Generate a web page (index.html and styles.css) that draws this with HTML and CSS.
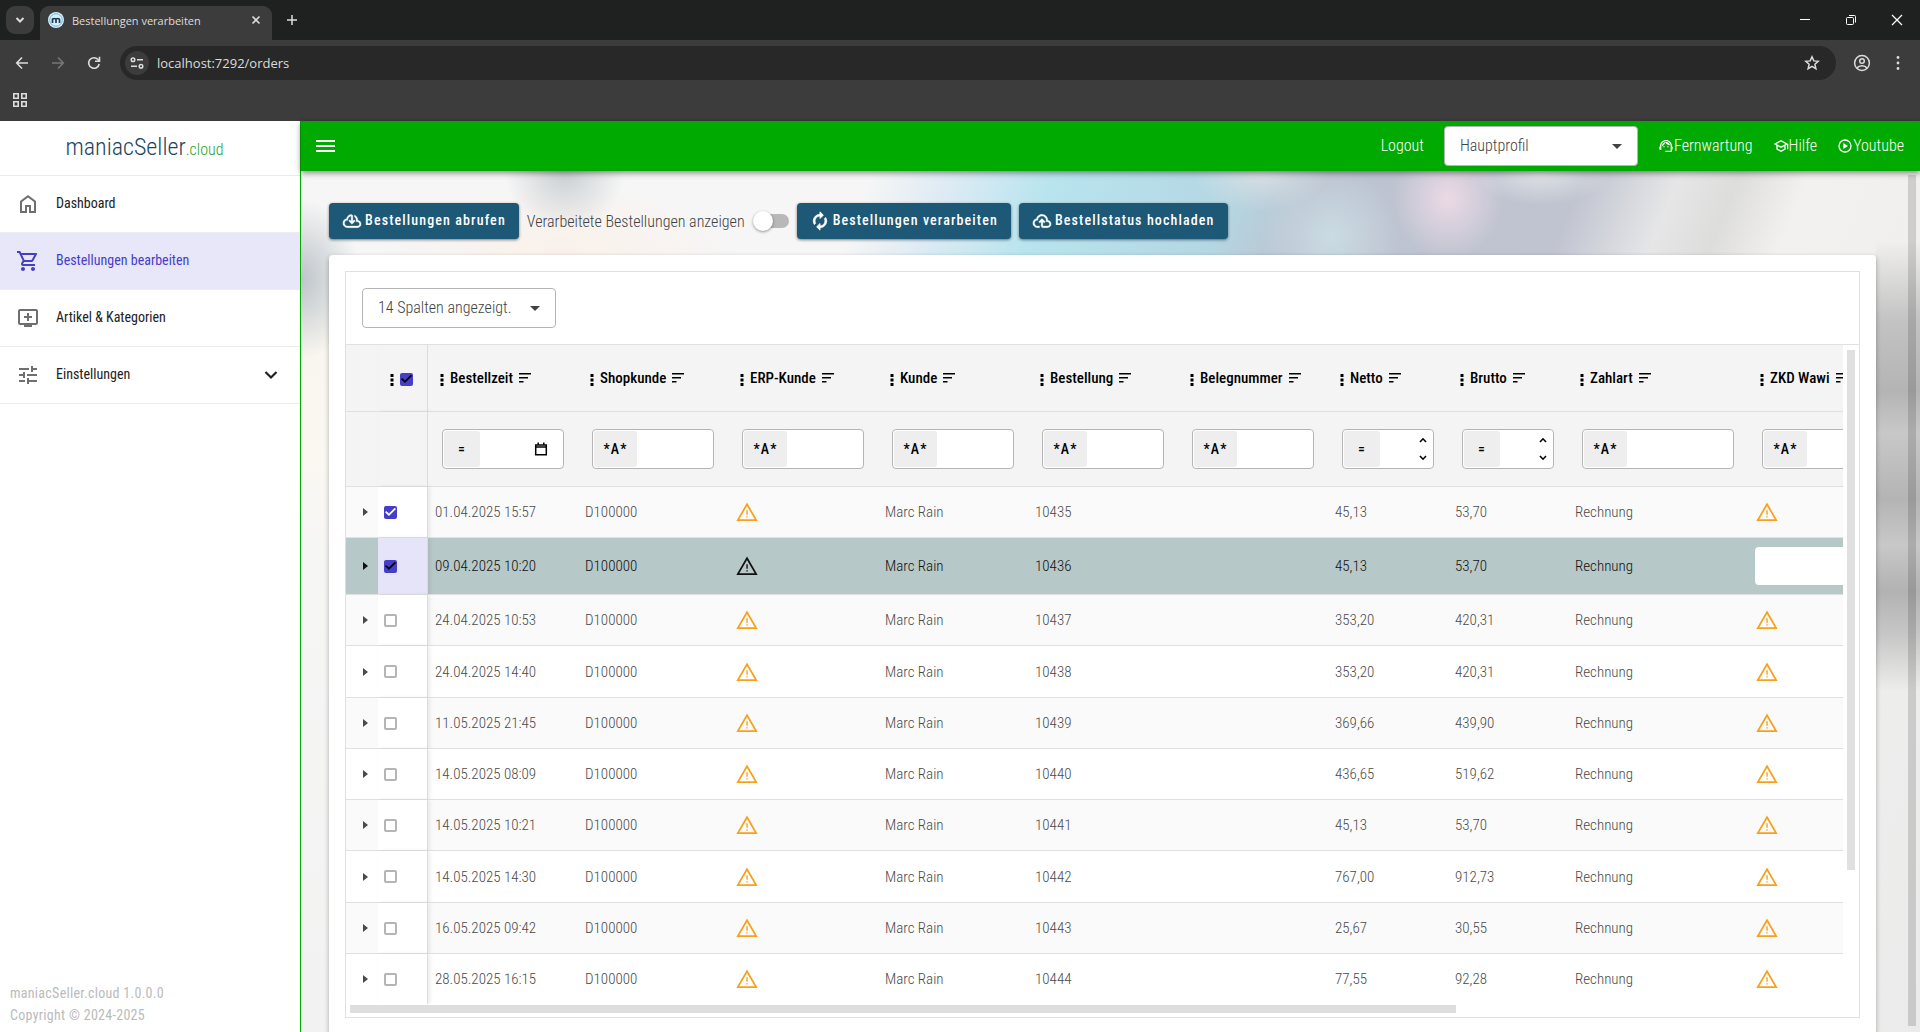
FILE: index.html
```html
<!DOCTYPE html>
<html lang="de">
<head>
<meta charset="utf-8">
<title>Bestellungen verarbeiten</title>
<link rel="stylesheet" href="styles.css">
</head>
<body>
<svg class="sprite" aria-hidden="true">
  <symbol id="i-warn" viewBox="0 0 24 24"><path d="M12 3.6 22 20.8H2z" fill="none" stroke="currentColor" stroke-width="1.9"/><path d="M11.3 10h1.5v5h-1.5zM11.3 16.5h1.5V18h-1.5z" fill="currentColor"/></symbol>
  <symbol id="i-sort" viewBox="0 0 16 16"><path d="M2 3h12v1.600H2zM2 7h9v1.600H2zM2 11h4.500v1.600H2z"/></symbol>
  <symbol id="i-dots" viewBox="0 0 4 14"><path d="M.5 1h3v3h-3zM.5 5.500h3v3h-3zM.5 10h3v3h-3z"/></symbol>
  <symbol id="i-caret" viewBox="0 0 10 5"><path d="M0 0h10L5 5z"/></symbol>
  <symbol id="i-right" viewBox="0 0 5 8"><path d="M0 0l5 4-5 4z"/></symbol>
  <symbol id="i-up" viewBox="0 0 8 6"><path d="M1 5l3-3.200L7 5" fill="none" stroke="currentColor" stroke-width="1.600"/></symbol>
  <symbol id="i-down" viewBox="0 0 8 6"><path d="M1 1l3 3.200L7 1" fill="none" stroke="currentColor" stroke-width="1.600"/></symbol>
</svg>

<header class="browser">
  <div class="tabstrip">
    <button class="tab-search" aria-label="Tabs suchen"><svg width="10" height="8" viewBox="0 0 10 8"><path d="M1.500 2 5 5.500 8.500 2" fill="none" stroke="currentColor" stroke-width="2"/></svg></button>
    <div class="tab">
      <svg class="favicon" width="16" height="16" viewBox="0 0 16 16"><circle cx="8" cy="8" r="8" fill="#d9f0fb"/><circle cx="8" cy="8" r="6.300" fill="none" stroke="#6fb4dc"/><path d="M4.500 11V6.500M4.500 8c0-2 3.500-2 3.500 0v3M8 8c0-2 3.500-2 3.500 0v3" fill="none" stroke="#1b3a57" stroke-width="1.700"/></svg>
      <span class="tab-title">Bestellungen verarbeiten</span>
      <button class="plain" aria-label="Tab schließen"><svg width="10" height="10" viewBox="0 0 10 10"><path d="M1.500 1.500l7 7M8.500 1.500l-7 7" stroke="currentColor" stroke-width="1.600"/></svg></button>
    </div>
    <button class="plain new-tab" aria-label="Neuer Tab"><svg width="12" height="12" viewBox="0 0 12 12"><path d="M6 1v10M1 6h10" stroke="currentColor" stroke-width="1.500"/></svg></button>
    <div class="window-buttons">
      <button class="plain" aria-label="Minimieren"><svg width="12" height="12" viewBox="0 0 12 12"><path d="M1 5.500h10" stroke="currentColor"/></svg></button>
      <button class="plain" aria-label="Wiederherstellen"><svg width="12" height="12" viewBox="0 0 12 12" fill="none" stroke="currentColor"><rect x="1.500" y="3.500" width="7" height="7" rx="1"/><path d="M4 1.500h5.500a1 1 0 0 1 1 1V8.500"/></svg></button>
      <button class="plain" aria-label="Schließen"><svg width="12" height="12" viewBox="0 0 12 12"><path d="M1 1l10 10M11 1 1 11" stroke="currentColor" stroke-width="1.200"/></svg></button>
    </div>
  </div>
  <div class="navbar">
    <button class="plain nav-button" aria-label="Zurück"><svg width="14" height="14" viewBox="0 0 14 14"><path d="M13 7H2M7 1.500 1.700 7 7 12.500" fill="none" stroke="currentColor" stroke-width="1.600"/></svg></button>
    <button class="plain nav-button off" aria-label="Vorwärts"><svg width="14" height="14" viewBox="0 0 14 14"><path d="M1 7h11M7 1.500 12.300 7 7 12.500" fill="none" stroke="currentColor" stroke-width="1.600"/></svg></button>
    <button class="plain nav-button" aria-label="Neu laden"><svg width="14" height="14" viewBox="0 0 14 14"><path d="M12.200 8A5.300 5.300 0 1 1 11 3.500l1.500 1.300M12.500.8v4.500H8" fill="none" stroke="currentColor" stroke-width="1.600"/></svg></button>
    <div class="omnibox">
      <button class="site-info" aria-label="Websiteinformationen"><svg width="14" height="12" viewBox="0 0 14 12" fill="none" stroke="currentColor" stroke-width="1.500"><circle cx="3" cy="2.800" r="1.800"/><path d="M7 2.800h6M1 9.200h6"/><circle cx="11" cy="9.200" r="1.800"/></svg></button>
      <input class="address" type="text" aria-label="Adresse" value="localhost:7292/orders">
      <button class="plain" aria-label="Lesezeichen"><svg width="16" height="16" viewBox="0 0 16 16"><path d="M8 1.800l1.800 4.100 4.400.4-3.300 3 1 4.400L8 11.400l-3.900 2.300 1-4.400-3.300-3 4.400-.4z" fill="none" stroke="currentColor" stroke-width="1.500"/></svg></button>
    </div>
    <button class="plain profile" aria-label="Profil"><svg width="18" height="18" viewBox="0 0 18 18" fill="none" stroke="currentColor" stroke-width="1.500"><circle cx="9" cy="9" r="7.400"/><circle cx="9" cy="7" r="2.300"/><path d="M4 14c2-3 8-3 10 0"/></svg></button>
    <button class="plain" aria-label="Menü"><svg width="4" height="16" viewBox="0 0 4 16"><circle cx="2" cy="2.500" r="1.400"/><circle cx="2" cy="8" r="1.400"/><circle cx="2" cy="13.500" r="1.400"/></svg></button>
  </div>
  <div class="bookmarks">
    <button class="plain" aria-label="Apps"><svg width="14" height="14" viewBox="0 0 14 14" fill="none" stroke="currentColor" stroke-width="1.600"><path d="M.8.800h4.400v4.400H.8zM8.800.800h4.400v4.400H8.800zM.8 8.800h4.400v4.400H.8zM8.800 8.800h4.400v4.400H8.800z"/></svg></button>
  </div>
</header>

<div class="app">
  <aside class="sidebar">
    <div class="brand"><span class="brand-name">maniacSeller</span><span class="brand-tld">.cloud</span></div>
    <nav class="menu">
      <a class="menu-item" href="#"><svg width="24" height="24" viewBox="0 0 24 24"><path d="M6 19h3v-6h6v6h3v-9l-6-4.500L6 10v9zm-2 2V9l8-6 8 6v12h-7v-6h-2v6H4z"/></svg><span>Dashboard</span></a>
      <a class="menu-item active" href="#"><svg width="24" height="24" viewBox="0 0 24 24"><path d="M15.550 13c.75 0 1.410-.41 1.750-1.030l3.580-6.490A.996.996 0 0 0 20.010 4H5.210l-.94-2H1v2h2l3.600 7.590-1.350 2.440C4.520 15.370 5.480 17 7 17h12v-2H7l1.100-2h7.450zM6.160 6h12.150l-2.760 5H8.530L6.160 6zM7 18c-1.100 0-1.990.9-1.990 2S5.900 22 7 22s2-.9 2-2-.9-2-2-2zm10 0c-1.100 0-1.990.9-1.990 2s.89 2 1.990 2 2-.9 2-2-.9-2-2-2z"/></svg><span>Bestellungen bearbeiten</span></a>
      <a class="menu-item" href="#"><svg width="24" height="24" viewBox="0 0 24 24"><path d="M20 3H4a2 2 0 0 0-2 2v12a2 2 0 0 0 2 2h4v2h8v-2h4a2 2 0 0 0 2-2V5a2 2 0 0 0-2-2zm0 14H4V5h16v12zm-4-7v2h-3v3h-2v-3H8v-2h3V7h2v3h3z"/></svg><span>Artikel &amp; Kategorien</span></a>
      <a class="menu-item" href="#"><svg width="24" height="24" viewBox="0 0 24 24"><path d="M3 17v2h6v-2H3zM3 5v2h10V5H3zm10 16v-2h8v-2h-8v-2h-2v6h2zM7 9v2H3v2h4v2h2V9H7zm14 4v-2H11v2h10zm-6-4h2V7h4V5h-4V3h-2v6z"/></svg><span>Einstellungen</span><svg class="chevron" width="14" height="10" viewBox="0 0 14 10"><path d="M1.500 2 7 7.500 12.500 2" fill="none" stroke="currentColor" stroke-width="2.200"/></svg></a>
    </nav>
    <footer class="version"><p>maniacSeller.cloud 1.0.0.0</p><p>Copyright © 2024-2025</p></footer>
  </aside>

  <div class="content">
    <header class="topbar">
      <button class="plain burger" aria-label="Menü"><svg width="20" height="14" viewBox="0 0 20 14"><path d="M0 1h19v2H0zM0 6h19v2H0zM0 11h19v2H0z" fill="currentColor"/></svg></button>
      <a class="logout" href="#">Logout</a>
      <div class="select profile-select">
        <select aria-label="Profil"><option>Hauptprofil</option></select>
        <svg width="10" height="5"><use href="#i-caret"/></svg>
      </div>
      <a class="top-link" href="#"><svg width="16" height="16" viewBox="0 0 24 24"><path d="M21 12.220C21 6.730 16.740 3 12 3c-4.690 0-9 3.650-9 9.280-.6.340-1 .98-1 1.720v2c0 1.100.9 2 2 2h1v-6.100c0-3.870 3.130-7 7-7s7 3.130 7 7V19h-8v2h8c1.100 0 2-.9 2-2v-1.220c.59-.31 1-.92 1-1.640v-2.300c0-.7-.41-1.310-1-1.620zM9 12a1 1 0 1 0 0 2 1 1 0 0 0 0-2zM15 12a1 1 0 1 0 0 2 1 1 0 0 0 0-2zM18 11.030A6.040 6.040 0 0 0 12.050 6c-3.030 0-6.290 2.510-6.030 6.450a8.075 8.075 0 0 0 4.860-5.890c1.310 2.630 4 4.440 7.120 4.470z"/></svg><span>Fernwartung</span></a>
      <a class="top-link" href="#"><svg width="16" height="16" viewBox="0 0 24 24"><path d="M12 3 1 9l4 2.180v6L12 21l7-3.820v-6l2-1.090V17h2V9L12 3zm6.820 6L12 12.720 5.180 9 12 5.280 18.820 9zM17 15.990l-5 2.730-5-2.730v-3.720L12 15l5-2.730v3.720z"/></svg><span>Hilfe</span></a>
      <a class="top-link" href="#"><svg width="16" height="16" viewBox="0 0 24 24"><path d="M12 2a10 10 0 1 0 0 20 10 10 0 0 0 0-20zm0 18a8 8 0 1 1 0-16 8 8 0 0 1 0 16zM9.500 16.500l7-4.500-7-4.500z"/></svg><span>Youtube</span></a>
    </header>

    <main class="page">
      <div class="page-body">
        <div class="actions">
          <button class="action"><svg width="20" height="20" viewBox="0 -960 960 960"><path d="M260-160q-91 0-155.500-63T40-377q0-78 47-139t123-78q17-72 85-137t145-65q33 0 56.500 23.500T520-716v242l64-62 56 56-160 160-160-160 56-56 64 62v-242q-76 14-118 73.500T280-520h-20q-58 0-99 41t-41 99q0 58 41 99t99 41h480q42 0 71-29t29-71q0-42-29-71t-71-29h-60v-80q0-48-22-89.500T600-680v-93q74 35 117 103.500T760-520q69 8 114.500 59.500T920-340q0 75-52.500 127.500T740-160H260Z"/></svg><span>Bestellungen abrufen</span></button>
          <label class="toggle" for="processed">Verarbeitete Bestellungen anzeigen<input id="processed" type="checkbox" role="switch"></label>
          <button class="action"><svg width="20" height="20" viewBox="0 0 24 24"><path d="M12 6v3l4-4-4-4v3c-4.420 0-8 3.580-8 8 0 1.570.46 3.030 1.240 4.260L6.700 14.800A5.870 5.870 0 0 1 6 12c0-3.310 2.690-6 6-6zm6.760 1.740L17.300 9.200c.44.840.7 1.790.7 2.800 0 3.310-2.690 6-6 6v-3l-4 4 4 4v-3c4.420 0 8-3.580 8-8 0-1.570-.46-3.030-1.240-4.260z" stroke-width=".6"/></svg><span>Bestellungen verarbeiten</span></button>
          <button class="action"><svg width="20" height="20" viewBox="0 -960 960 960"><path d="M260-160q-91 0-155.500-63T40-377q0-78 47-139t123-78q25-92 100-149t170-57q117 0 198.500 81.500T760-520q69 8 114.500 59.500T920-340q0 75-52.500 127.500T740-160H520q-33 0-56.500-23.500T440-240v-206l-64 62-56-56 160-160 160 160-56 56-64-62v206h220q42 0 71-29t29-71q0-42-29-71t-71-29h-60v-80q0-83-58.500-141.500T480-720q-83 0-141.500 58.500T280-520h-20q-58 0-99 41t-41 99q0 58 41 99t99 41h100v80H260Z"/></svg><span>Bestellstatus hochladen</span></button>
        </div>

        <section class="card">
          <div class="grid-panel">
            <div class="grid-tools">
              <div class="select column-select">
                <select aria-label="Spalten"><option>14 Spalten angezeigt.</option></select>
                <svg width="10" height="5"><use href="#i-caret"/></svg>
              </div>
            </div>
            <div class="grid-area">
              <div class="grid-viewport">
                <table class="orders">
                  <colgroup><col class="w-expand"><col class="w-check"><col class="w-text"><col class="w-text"><col class="w-text"><col class="w-text"><col class="w-text"><col class="w-text"><col class="w-number"><col class="w-number"><col class="w-wide"><col class="w-wide"></colgroup>
                  <thead>
                    <tr class="titles">
                      <th></th>
                      <th class="check"><span class="head"><svg width="4" height="14"><use href="#i-dots"/></svg><input type="checkbox" class="dark" aria-label="Alle auswählen" checked></span></th>
                      <th><span class="head"><svg width="4" height="14"><use href="#i-dots"/></svg>Bestellzeit<svg width="16" height="16"><use href="#i-sort"/></svg></span></th>
                      <th><span class="head"><svg width="4" height="14"><use href="#i-dots"/></svg>Shopkunde<svg width="16" height="16"><use href="#i-sort"/></svg></span></th>
                      <th><span class="head"><svg width="4" height="14"><use href="#i-dots"/></svg>ERP-Kunde<svg width="16" height="16"><use href="#i-sort"/></svg></span></th>
                      <th><span class="head"><svg width="4" height="14"><use href="#i-dots"/></svg>Kunde<svg width="16" height="16"><use href="#i-sort"/></svg></span></th>
                      <th><span class="head"><svg width="4" height="14"><use href="#i-dots"/></svg>Bestellung<svg width="16" height="16"><use href="#i-sort"/></svg></span></th>
                      <th><span class="head"><svg width="4" height="14"><use href="#i-dots"/></svg>Belegnummer<svg width="16" height="16"><use href="#i-sort"/></svg></span></th>
                      <th><span class="head"><svg width="4" height="14"><use href="#i-dots"/></svg>Netto<svg width="16" height="16"><use href="#i-sort"/></svg></span></th>
                      <th><span class="head"><svg width="4" height="14"><use href="#i-dots"/></svg>Brutto<svg width="16" height="16"><use href="#i-sort"/></svg></span></th>
                      <th><span class="head"><svg width="4" height="14"><use href="#i-dots"/></svg>Zahlart<svg width="16" height="16"><use href="#i-sort"/></svg></span></th>
                      <th><span class="head"><svg width="4" height="14"><use href="#i-dots"/></svg>ZKD Wawi<svg width="16" height="16"><use href="#i-sort"/></svg></span></th>
                    </tr>
                    <tr class="filters">
                      <th></th>
                      <th class="check"></th>
                      <th><div class="filter"><button class="op eq">=</button><input type="text" aria-label="Bestellzeit"><button class="plain date" aria-label="Kalender"><svg width="14" height="14" viewBox="0 0 14 14"><path d="M1.700 3h10.600v9.800H1.700zM1.700 5h10.600M4.200.500V3M9.800.500V3" fill="none" stroke="currentColor" stroke-width="1.500"/></svg></button></div></th>
                      <th><div class="filter"><button class="op">*A*</button><input type="text" aria-label="Shopkunde"></div></th>
                      <th><div class="filter"><button class="op">*A*</button><input type="text" aria-label="ERP-Kunde"></div></th>
                      <th><div class="filter"><button class="op">*A*</button><input type="text" aria-label="Kunde"></div></th>
                      <th><div class="filter"><button class="op">*A*</button><input type="text" aria-label="Bestellung"></div></th>
                      <th><div class="filter"><button class="op">*A*</button><input type="text" aria-label="Belegnummer"></div></th>
                      <th><div class="filter"><button class="op eq">=</button><input type="text" aria-label="Netto"><span class="spin"><button class="plain" aria-label="Mehr"><svg width="8" height="6"><use href="#i-up"/></svg></button><button class="plain" aria-label="Weniger"><svg width="8" height="6"><use href="#i-down"/></svg></button></span></div></th>
                      <th><div class="filter"><button class="op eq">=</button><input type="text" aria-label="Brutto"><span class="spin"><button class="plain" aria-label="Mehr"><svg width="8" height="6"><use href="#i-up"/></svg></button><button class="plain" aria-label="Weniger"><svg width="8" height="6"><use href="#i-down"/></svg></button></span></div></th>
                      <th><div class="filter"><button class="op">*A*</button><input type="text" aria-label="Zahlart"></div></th>
                      <th><div class="filter"><button class="op">*A*</button><input type="text" aria-label="ZKD Wawi"></div></th>
                    </tr>
                  </thead>
                  <tbody>
                    <tr><td class="expand"><button class="plain" aria-label="Details"><svg width="5" height="8"><use href="#i-right"/></svg></button></td><td class="check"><input type="checkbox" aria-label="Auswählen" checked></td><td>01.04.2025 15:57</td><td>D100000</td><td class="warn"><svg width="22" height="22"><use href="#i-warn"/></svg></td><td>Marc Rain</td><td>10435</td><td></td><td>45,13</td><td>53,70</td><td>Rechnung</td><td class="warn"><svg width="22" height="22"><use href="#i-warn"/></svg></td></tr>
                    <tr class="selected"><td class="expand"><button class="plain" aria-label="Details"><svg width="5" height="8"><use href="#i-right"/></svg></button></td><td class="check"><input type="checkbox" class="dark" aria-label="Auswählen" checked></td><td>09.04.2025 10:20</td><td>D100000</td><td class="warn"><svg width="22" height="22"><use href="#i-warn"/></svg></td><td>Marc Rain</td><td>10436</td><td></td><td>45,13</td><td>53,70</td><td>Rechnung</td><td><input class="edit" type="text" aria-label="ZKD Wawi"></td></tr>
                    <tr><td class="expand"><button class="plain" aria-label="Details"><svg width="5" height="8"><use href="#i-right"/></svg></button></td><td class="check"><input type="checkbox" aria-label="Auswählen"></td><td>24.04.2025 10:53</td><td>D100000</td><td class="warn"><svg width="22" height="22"><use href="#i-warn"/></svg></td><td>Marc Rain</td><td>10437</td><td></td><td>353,20</td><td>420,31</td><td>Rechnung</td><td class="warn"><svg width="22" height="22"><use href="#i-warn"/></svg></td></tr>
                    <tr><td class="expand"><button class="plain" aria-label="Details"><svg width="5" height="8"><use href="#i-right"/></svg></button></td><td class="check"><input type="checkbox" aria-label="Auswählen"></td><td>24.04.2025 14:40</td><td>D100000</td><td class="warn"><svg width="22" height="22"><use href="#i-warn"/></svg></td><td>Marc Rain</td><td>10438</td><td></td><td>353,20</td><td>420,31</td><td>Rechnung</td><td class="warn"><svg width="22" height="22"><use href="#i-warn"/></svg></td></tr>
                    <tr><td class="expand"><button class="plain" aria-label="Details"><svg width="5" height="8"><use href="#i-right"/></svg></button></td><td class="check"><input type="checkbox" aria-label="Auswählen"></td><td>11.05.2025 21:45</td><td>D100000</td><td class="warn"><svg width="22" height="22"><use href="#i-warn"/></svg></td><td>Marc Rain</td><td>10439</td><td></td><td>369,66</td><td>439,90</td><td>Rechnung</td><td class="warn"><svg width="22" height="22"><use href="#i-warn"/></svg></td></tr>
                    <tr><td class="expand"><button class="plain" aria-label="Details"><svg width="5" height="8"><use href="#i-right"/></svg></button></td><td class="check"><input type="checkbox" aria-label="Auswählen"></td><td>14.05.2025 08:09</td><td>D100000</td><td class="warn"><svg width="22" height="22"><use href="#i-warn"/></svg></td><td>Marc Rain</td><td>10440</td><td></td><td>436,65</td><td>519,62</td><td>Rechnung</td><td class="warn"><svg width="22" height="22"><use href="#i-warn"/></svg></td></tr>
                    <tr><td class="expand"><button class="plain" aria-label="Details"><svg width="5" height="8"><use href="#i-right"/></svg></button></td><td class="check"><input type="checkbox" aria-label="Auswählen"></td><td>14.05.2025 10:21</td><td>D100000</td><td class="warn"><svg width="22" height="22"><use href="#i-warn"/></svg></td><td>Marc Rain</td><td>10441</td><td></td><td>45,13</td><td>53,70</td><td>Rechnung</td><td class="warn"><svg width="22" height="22"><use href="#i-warn"/></svg></td></tr>
                    <tr><td class="expand"><button class="plain" aria-label="Details"><svg width="5" height="8"><use href="#i-right"/></svg></button></td><td class="check"><input type="checkbox" aria-label="Auswählen"></td><td>14.05.2025 14:30</td><td>D100000</td><td class="warn"><svg width="22" height="22"><use href="#i-warn"/></svg></td><td>Marc Rain</td><td>10442</td><td></td><td>767,00</td><td>912,73</td><td>Rechnung</td><td class="warn"><svg width="22" height="22"><use href="#i-warn"/></svg></td></tr>
                    <tr><td class="expand"><button class="plain" aria-label="Details"><svg width="5" height="8"><use href="#i-right"/></svg></button></td><td class="check"><input type="checkbox" aria-label="Auswählen"></td><td>16.05.2025 09:42</td><td>D100000</td><td class="warn"><svg width="22" height="22"><use href="#i-warn"/></svg></td><td>Marc Rain</td><td>10443</td><td></td><td>25,67</td><td>30,55</td><td>Rechnung</td><td class="warn"><svg width="22" height="22"><use href="#i-warn"/></svg></td></tr>
                    <tr><td class="expand"><button class="plain" aria-label="Details"><svg width="5" height="8"><use href="#i-right"/></svg></button></td><td class="check"><input type="checkbox" aria-label="Auswählen"></td><td>28.05.2025 16:15</td><td>D100000</td><td class="warn"><svg width="22" height="22"><use href="#i-warn"/></svg></td><td>Marc Rain</td><td>10444</td><td></td><td>77,55</td><td>92,28</td><td>Rechnung</td><td class="warn"><svg width="22" height="22"><use href="#i-warn"/></svg></td></tr>
                  </tbody>
                </table>
              </div>
              <div class="v-track"><div class="v-thumb"></div></div>
            </div>
            <div class="h-track"><div class="h-thumb"></div></div>
          </div>
        </section>
      </div>
      <div class="page-scroll"></div>
    </main>
  </div>
</div>
</body>
</html>
```
FILE: styles.css
```css
* { box-sizing: border-box; }
body {
  margin: 0;
  height: 100vh;
  display: flex;
  flex-direction: column;
  overflow: hidden;
  background: #fff;
  color: #212121;
  font-family: "Roboto Condensed", Roboto, sans-serif;
  font-size: 16px;
  font-weight: 300;
}
svg { display: block; flex: none; }
svg:not([fill]) { fill: currentColor; }
.sprite { width: 0; height: 0; position: absolute; }
button, input, select { font: inherit; color: inherit; margin: 0; }
button { border: 0; cursor: pointer; }
a { color: inherit; text-decoration: none; }
.plain { display: flex; align-items: center; justify-content: center; padding: 0; background: none; }

/* Browser frame */
.browser { flex: none; background: #3c3c3c; color: #dcdcdc; font-family: "Open Sans", sans-serif; font-weight: 400; }
.tabstrip { display: flex; align-items: center; height: 40px; padding-left: 6px; background: #1f2121; }
.tab-search { display: flex; align-items: center; justify-content: center; width: 28px; height: 28px; padding: 0; border-radius: 9px; background: #3c3c3c; }
.tab { display: flex; align-items: center; align-self: flex-end; width: 232px; height: 34px; margin-left: 6px; padding: 0 11px 6px 8px; border-radius: 9px 9px 0 0; background: #3c3c3c; font-size: 11px; }
.tab-title { flex: 1; margin-left: 8px; }
.new-tab { margin-left: 14px; }
.window-buttons { display: flex; gap: 34px; margin-left: auto; padding-right: 17px; color: #fff; }
.navbar { display: flex; align-items: center; height: 46px; padding: 0 20px 0 15px; }
.nav-button { width: 14px; margin-right: 22px; }
.nav-button.off { color: #777; }
.omnibox { display: flex; align-items: center; flex: 1; height: 34px; margin-left: -3px; padding: 0 16px 0 5px; border-radius: 17px; background: #282828; }
.site-info { display: flex; align-items: center; justify-content: center; width: 24px; height: 24px; padding: 0; border-radius: 12px; background: #3c3c3c; }
.address { flex: 1; min-width: 0; padding: 0; margin-left: 8px; border: 0; outline: 0; background: none; font-size: 13px; }
.profile { margin: 0 25px 0 17px; }
.bookmarks { display: flex; align-items: center; height: 35px; padding: 0 0 7px 13px; }

/* App shell */
.app { flex: 1; min-height: 0; display: flex; }
.sidebar { display: flex; flex-direction: column; flex: none; width: 301px; border-right: 1px solid #00aa00; }
.brand { display: flex; align-items: baseline; justify-content: center; height: 54px; padding: 12px 22px 0 11px; color: #1d4560; }
.brand-name { font-size: 24px; line-height: 28px; }
.brand-tld { color: #2ca02c; font-size: 16px; }
.menu-item { display: flex; align-items: center; height: 57px; padding: 0 22px 0 16px; border-top: 1px solid #ececec; font-size: 14px; font-weight: 400; }
.menu-item:last-child { height: 58px; border-bottom: 1px solid #ececec; }
.menu-item span { flex: 1; margin-left: 16px; padding-bottom: 2px; }
.menu-item svg { color: #6f6f6f; }
.menu-item .chevron { color: #212121; }
.menu-item.active { background: #e8e6f9; color: #453ec8; }
.menu-item.active svg { color: #453ec8; }
.version { margin-top: auto; padding: 0 10px 6px; color: #bbb; font-size: 14px; font-weight: 400; line-height: 22px; letter-spacing: .02em; }
.version p { margin: 0; }
.content { flex: 1; min-width: 0; display: flex; flex-direction: column; }
.topbar { display: flex; align-items: center; flex: none; height: 50px; padding: 0 16px 0 15px; background: #00aa00; color: #fff; box-shadow: 0 2px 6px rgba(0, 0, 0, .45); z-index: 1; }
.burger { margin-right: auto; }
.logout, .top-link span { padding-bottom: 2px; }
.profile-select { width: 194px; margin: 0 20px; }
.top-link { display: flex; align-items: center; margin-left: 20px; }
.profile-select + .top-link { margin-left: 0; }

.select { position: relative; display: flex; }
.select select { appearance: none; width: 100%; height: 40px; padding: 0 36px 2px 15px; border: 1px solid #b5b5b5; border-radius: 4px; background: #fff; color: #424242; }
.select svg { position: absolute; top: 18px; right: 16px; color: #424242; pointer-events: none; }

/* Page */
.page {
  flex: 1;
  min-height: 0;
  display: flex;
  overflow: hidden;
  background:
    radial-gradient(ellipse 60px 60px at 264px 0, rgba(190, 196, 200, .8), transparent),
    radial-gradient(ellipse 60px 80px at 0 108px, rgba(176, 184, 190, .8), transparent),
    radial-gradient(ellipse 180px 70px at 260px 84px, rgba(252, 238, 228, .7), transparent),
    radial-gradient(ellipse 56px 60px at 1147px 28px, rgba(240, 220, 232, .9), transparent),
    radial-gradient(ellipse 70px 40px at 960px 0, rgba(225, 225, 228, .8), transparent),
    radial-gradient(ellipse 70px 34px at 1240px 0, rgba(226, 230, 232, .9), transparent),
    radial-gradient(ellipse 70px 70px at 1030px 66px, rgba(208, 230, 236, .7), transparent),
    linear-gradient(180deg, transparent 70px, rgba(190, 190, 190, .9) 150px, #b4b4b4 220px, #c8c8c8 262px, #b4b4b4 328px, #c8c8c8 374px, #b2b2b2 420px, rgba(190, 190, 190, .8) 465px, transparent 520px) right / 44px 100% no-repeat,
    linear-gradient(180deg, transparent 84px, #f9f6f0 180px, #fbf8f2 290px, #f6f6f5 380px, #f2f2f2 100%) left / 200px 100% no-repeat,
    linear-gradient(112deg, #f6f6f6 530px, #dfebf4 600px, #b8e4ee 700px, #b4d7e3 870px, #bcc3d0 950px, #c0c4d0 1190px, #e6e6e7 1280px, #dddddc 1335px, #f2f1ef 1400px, #ebebeb 100%);
}
.page-body { flex: 1; min-width: 0; padding: 32px 32px 0 28px; }
.page-scroll { flex: none; width: 8px; margin: 4px 4px 6px 0; background: rgba(0, 0, 0, .14); }
.actions { display: flex; align-items: center; margin-bottom: 16px; }
.action { display: flex; align-items: center; height: 36px; padding: 0 13px; border-radius: 4px; background: #1d5876; color: #fff; font-size: 14px; font-weight: 500; letter-spacing: .08em; box-shadow: 0 1px 3px rgba(0, 0, 0, .5); }
.action span { margin-left: 3px; padding-bottom: 2px; }
.action path { stroke: #fff; stroke-width: 14; }
.action path[stroke-width] { stroke-width: 1; }
.action + .action { margin-left: 8px; }
.toggle { display: flex; align-items: center; margin: 0 8px; color: #424242; }
.toggle input { appearance: none; display: grid; align-items: center; width: 36px; height: 20px; margin-left: 8px; }
.toggle input::before { content: ""; grid-area: 1 / 1; width: 30px; height: 14px; margin-left: 6px; border-radius: 7px; background: #b8b8b8; }
.toggle input::after { content: ""; grid-area: 1 / 1; width: 20px; height: 20px; border-radius: 50%; background: #fff; box-shadow: 0 1px 3px rgba(0, 0, 0, .4); }

/* Order grid */
.card { padding: 16px; border-radius: 4px; background: #fff; box-shadow: 0 2px 5px rgba(0, 0, 0, .3); }
.grid-panel { border: 1px solid #e0e0e0; }
.grid-tools { padding: 16px; border-bottom: 1px solid #e0e0e0; }
.column-select { width: 194px; }
.grid-area { display: flex; }
.grid-viewport { flex: 1; min-width: 0; overflow: hidden; }
.v-track { flex: none; width: 16px; padding: 5px 4px 0; }
.v-thumb { height: 520px; background: #e0e0e0; }
.h-track { padding: 1px 4px 4px; }
.h-thumb { width: 73.5%; height: 8px; background: #dedede; }

.orders { table-layout: fixed; width: 1582px; border-collapse: separate; border-spacing: 0; }
.w-expand { width: 32px; }
.w-check { width: 50px; }
.w-text { width: 150px; }
.w-number { width: 120px; }
.w-wide { width: 180px; }
.orders th, .orders td { padding: 0; border-bottom: 1px solid #e0e0e0; text-align: left; }
.orders th { background: #f4f4f4; color: #000; font-weight: 500; padding: 0 14px; }
.orders th.check, .orders td.check { border-right: 1px solid #dcdcdc; box-shadow: 2px 0 4px rgba(0, 0, 0, .08); }
.orders th.check { padding: 0 0 0 14px; }
.orders td.check { padding-left: 6px; background: #fff; }
.orders td { padding-left: 7px; color: #4a4a4a; font-size: 15px; }
.titles th { height: 67px; }
.filters th { height: 75px; }
.head { display: flex; align-items: center; gap: 6px; margin-left: -2px; font-size: 15px; white-space: nowrap; }
.head svg:first-child { margin-top: 4px; }
.head svg:last-child { margin-left: -2px; }
.head input { margin-top: 2px; }
.orders tbody tr { height: 51px; background: #fff; }
.orders tbody tr:nth-child(odd) { background: #fafafa; }
.orders tbody tr:nth-child(4n) { height: 52px; }
.orders tbody tr.selected { height: 57px; background: #b6c8c7; }
.orders tbody tr.selected td { color: #111; }
.orders tbody tr.selected td.check { background: #e6e4f9; }
.orders tbody tr:last-child { height: 50px; }
.orders tbody tr:last-child td { border-bottom: 0; }
.orders td.expand { padding-left: 17px; }
.orders td.warn { padding-left: 8px; color: #f9a01b; }
.orders input[type="checkbox"] { appearance: none; display: grid; place-items: center; width: 13px; height: 13px; border: 2px solid #b5b5b5; border-radius: 2px; background: #fff; }
.orders input[type="checkbox"]:checked { border: 0; background: #453ec8; color: #fff; }
.orders input.dark:checked { color: #000; }
.orders input[type="checkbox"]:checked::after { content: ""; width: 11px; height: 9px; background: currentColor; clip-path: polygon(0 52%, 11% 38%, 36% 66%, 89% 4%, 100% 17%, 36% 94%); }

.filter { display: flex; align-items: center; height: 40px; padding: 1px; border: 1px solid #b5b5b5; border-radius: 4px; background: #fff; }
.filter input { flex: 1; width: 0; min-width: 0; padding: 0 4px; border: 0; outline: 0; background: none; }
.op { flex: none; width: 43px; height: 36px; padding: 0; border-radius: 3px; background: #eee; font-size: 14px; letter-spacing: .08em; }
.op.eq { width: 36px; }
.date { margin-right: 14px; }
.spin { display: flex; flex-direction: column; gap: 12px; margin-right: 5px; }
.edit { width: 160px; height: 38px; padding: 0 8px; border: 0; border-radius: 4px; background: #fff; }
```
